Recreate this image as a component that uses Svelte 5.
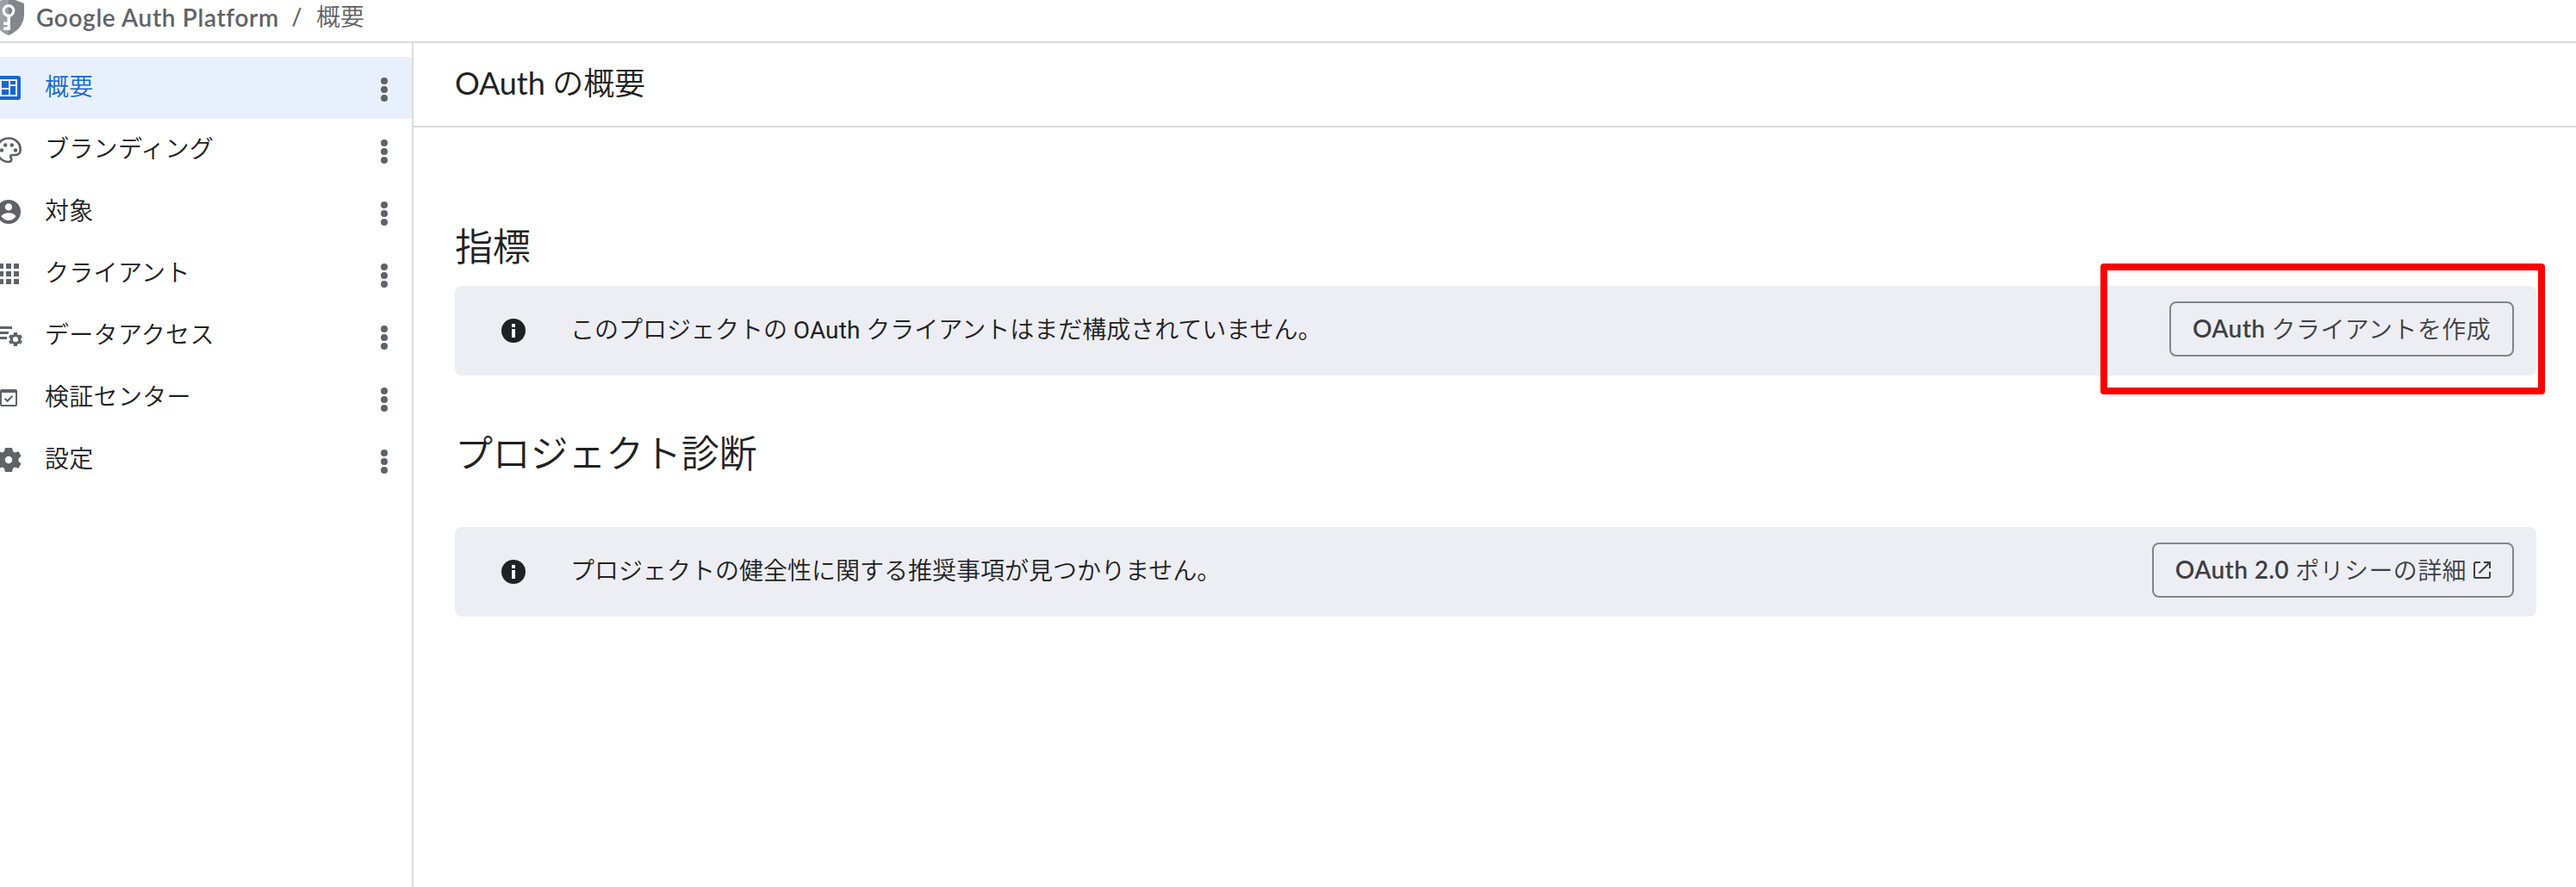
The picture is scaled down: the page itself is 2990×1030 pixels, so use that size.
<script>
  const navItems = [
    { label: "概要", icon: "dashboard", active: true },
    { label: "ブランディング", icon: "palette" },
    { label: "対象", icon: "person" },
    { label: "クライアント", icon: "apps" },
    { label: "データアクセス", icon: "data" },
    { label: "検証センター", icon: "verify" },
    { label: "設定", icon: "settings" },
  ];
</script>

{#snippet infoIcon()}
  <svg class="info" viewBox="0 0 28 28">
    <circle cx="14" cy="14" r="14" fill="#202124" />
    <path d="M12 6h4v4h-4zM12 12h4v10h-4z" fill="#fff" />
  </svg>
{/snippet}

<div class="page">
  <header class="topbar">
    <svg class="shield" viewBox="0 0 36 44">
      <path d="M18 0L0 7v13c0 11 8 20 18 24z" fill="#9aa0a6" />
      <path d="M18 0l18 7v13c0 11-8 20-18 24z" fill="#80868b" />
      <circle cx="18" cy="15.500" r="5.800" fill="none" stroke="#fff" stroke-width="3.200" />
      <path d="M16.500 21h3.500v17h-8v-3.500h4.500v-2.500h-4.500v-3.500h4.500z" fill="#fff" />
    </svg>
    <span class="product">Google Auth Platform</span>
    <span class="slash">/</span>
    <span class="crumb">概要</span>
  </header>

  <div class="body">
    <nav class="sidebar">
      {#each navItems as item}
        <a class="nav-item" class:active={item.active} href="#{item.icon}">
          <svg class="nav-icon" viewBox="0 0 36 36" fill="currentColor">
            {#if item.icon === "dashboard"}
              <path fill-rule="evenodd" d="M7 4h22a3 3 0 0 1 3 3v22a3 3 0 0 1-3 3H7a3 3 0 0 1-3-3V7a3 3 0 0 1 3-3zm1 4v20h20V8z" />
              <path d="M10 10h8v8h-8zM20 10h6v4h-6zM10 20h8v6h-8zM20 16h6v10h-6z" />
            {:else if item.icon === "palette"}
              <path d="M18 4.500C10 4.500 4.500 10.500 4.500 18S10.500 32 18 32c2 0 3.300-1.300 3.300-3.200 0-1-.5-1.500-.9-2.200-.6-1.300.2-2.600 1.800-2.600H26c3.300 0 5.700-2.500 5.700-6C31.700 10 25.500 4.500 18 4.500z" fill="none" stroke="currentColor" stroke-width="2.700" />
              <circle cx="10" cy="18.500" r="2.200" />
              <circle cx="14.200" cy="12.500" r="2.200" />
              <circle cx="21.800" cy="12.500" r="2.200" />
              <circle cx="26" cy="18.500" r="2.200" />
            {:else if item.icon === "person"}
              <path fill-rule="evenodd" d="M18 4a14 14 0 1 0 0 28 14 14 0 0 0 0-28zm0 4.200a4.200 4.200 0 1 1 0 8.400 4.200 4.200 0 0 1 0-8.400zM18 28c-3.500 0-6.500-1.800-8.400-4.500 0-2.800 5.600-4.300 8.400-4.300s8.400 1.500 8.400 4.300C24.500 26.200 21.500 28 18 28z" />
            {:else if item.icon === "apps"}
              <path d="M6 6h6v6H6zM15 6h6v6h-6zM24 6h6v6h-6zM6 15h6v6H6zM15 15h6v6h-6zM24 15h6v6h-6zM6 24h6v6H6zM15 24h6v6h-6zM24 24h6v6h-6z" />
            {:else if item.icon === "data"}
              <path d="M2 7h20v3H2zM2 13h16v3H2zM2 19h14v3H2z" />
              <circle cx="26" cy="22" r="4.700" fill="none" stroke="currentColor" stroke-width="3.200" />
              <g fill="none" stroke="currentColor" stroke-width="4">
                <path d="M26 14v4M26 26v4M19 18l3.500 2M29.500 24l3.500 2M19 26l3.500-2M29.500 20l3.500-2" />
              </g>
            {:else if item.icon === "verify"}
              <path fill-rule="evenodd" d="M10 8h16a2 2 0 0 1 2 2v16a2 2 0 0 1-2 2H10a2 2 0 0 1-2-2V10a2 2 0 0 1 2-2zm0 4v14h16V12z" />
              <path d="M13.500 18.800l3 3 6-6" fill="none" stroke="currentColor" stroke-width="2" />
            {:else}
              <path fill-rule="evenodd" d="M14 4h8l1 4.300 2.300 1.300 4.200-1.400 3 5.400-3 3v2.800l3 3-3 5.400-4.200-1.400L23 27.700 22 32h-8l-1-4.300-2.300-1.300-4.200 1.400-3-5.400 3-3v-2.800l-3-3 3-5.400 4.200 1.400L13 8.300zM18 13.800a4.200 4.200 0 1 0 0 8.400 4.200 4.200 0 0 0 0-8.400z" />
            {/if}
          </svg>
          <span class="nav-label">{item.label}</span>
          <svg class="more" viewBox="0 0 8 28">
            <circle cx="4" cy="4" r="4" />
            <circle cx="4" cy="14" r="4" />
            <circle cx="4" cy="24" r="4" />
          </svg>
        </a>
      {/each}
    </nav>

    <main class="content">
      <div class="title-bar">
        <h1><span class="latin">OAuth</span> の概要</h1>
      </div>

      <section class="metrics">
        <h2>指標</h2>
        <div class="notice">
          {@render infoIcon()}
          <p>このプロジェクトの <span class="roboto">OAuth</span> クライアントはまだ構成されていません。</p>
          <button class="create"><span class="latin">OAuth</span> クライアントを作成</button>
          <div class="highlight"></div>
        </div>
      </section>

      <section class="diagnosis">
        <h2>プロジェクト診断</h2>
        <div class="notice">
          {@render infoIcon()}
          <p>プロジェクトの健全性に関する推奨事項が見つかりません。</p>
          <button class="policy">
            <span class="latin">OAuth 2.0</span> ポリシーの詳細
            <svg class="launch" viewBox="0 0 20 20" fill="none" stroke="#3c4043" stroke-width="2">
              <path d="M8 1H2.500A1.500 1.500 0 0 0 1 2.500v15A1.500 1.500 0 0 0 2.500 19h15a1.500 1.500 0 0 0 1.500-1.500V12" />
              <path d="M12 1h7v7M18.500 1.500L6.500 13.500" />
            </svg>
          </button>
        </div>
      </section>
    </main>
  </div>
</div>

<style>
  :global(body) {
    background: #fff;
  }

  .page {
    display: flex;
    flex-direction: column;
    height: 1030px;
    overflow: hidden;
    color: #202124;
    font-family: Roboto, "Noto Sans CJK JP", sans-serif;
    font-size: 28px;
    font-weight: 350;
  }

  .topbar {
    display: flex;
    align-items: center;
    box-sizing: border-box;
    height: 50px;
    padding-bottom: 8px;
    border-bottom: 2px solid #dadce0;
    color: #5f6368;
    line-height: 40px;
    white-space: nowrap;
  }

  .shield {
    flex: none;
    width: 36px;
    height: 44px;
    margin: -2px 14px 0 -8px;
  }

  .product {
    width: 296px;
    font-family: Lato, sans-serif;
    font-size: 28px;
    font-weight: 600;
    letter-spacing: 0.65px;
  }

  .slash {
    width: 29px;
    margin-left: 1px;
    font-weight: 400;
  }

  .crumb {
    margin: 2px 0 0 -1px;
  }

  .body {
    display: flex;
    flex: 1;
  }

  .sidebar {
    flex: none;
    width: 478px;
    padding-top: 16px;
    border-right: 2px solid #dadce0;
  }

  .nav-item {
    display: flex;
    align-items: center;
    height: 72px;
    color: #5f6368;
    text-decoration: none;
  }

  .nav-item.active {
    background: #e8f0fe;
  }

  .nav-icon {
    flex: none;
    width: 36px;
    height: 36px;
    margin-left: -8px;
  }

  .nav-label {
    flex: 1;
    margin-left: 24px;
    color: #202124;
    letter-spacing: 0.3px;
    line-height: 40px;
  }

  .active .nav-icon,
  .active .nav-label {
    color: #1967d2;
  }

  .more {
    width: 8px;
    height: 28px;
    margin: 4px 28px 0 0;
    fill: #5f6368;
  }

  .content {
    flex: 1;
  }

  .title-bar {
    box-sizing: border-box;
    height: 98px;
    padding: 19px 48px;
    border-bottom: 2px solid #dadce0;
  }

  h1,
  h2,
  p {
    margin: 0;
    font-weight: 350;
    white-space: nowrap;
  }

  h1 {
    font-size: 36px;
    letter-spacing: -0.1px;
    line-height: 54px;
  }

  h2 {
    font-size: 44px;
    letter-spacing: -0.2px;
    line-height: 60px;
  }

  .latin {
    font-family: Lato, sans-serif;
    font-weight: 400;
  }

  .metrics {
    padding: 110px 46px 0 48px;
  }

  .metrics h2 {
    margin-bottom: 14px;
  }

  .diagnosis {
    padding: 62px 46px 0 48px;
  }

  .diagnosis h2 {
    margin-bottom: 54px;
  }

  .notice {
    position: relative;
    display: flex;
    align-items: center;
    box-sizing: border-box;
    height: 104px;
    padding: 0 26px 0 54px;
    border-radius: 8px;
    background: #edeef3;
  }

  .info {
    flex: none;
    width: 28px;
    height: 28px;
  }

  .notice p {
    flex: 1;
    margin-left: 52px;
    line-height: 40px;
  }

  .roboto {
    font-family: Roboto, sans-serif;
    font-weight: 400;
    letter-spacing: 0.1px;
  }

  button {
    display: flex;
    align-items: center;
    justify-content: center;
    box-sizing: border-box;
    height: 64px;
    margin-bottom: 4px;
    padding: 0 0 3px;
    border: 2px solid #80868b;
    border-radius: 8px;
    background: transparent;
    color: #3c4043;
    font: inherit;
    letter-spacing: 0.4px;
    white-space: pre;
  }

  button .latin {
    font-weight: 600;
  }

  .create {
    width: 400px;
  }

  .policy {
    width: 420px;
  }

  .launch {
    width: 20px;
    height: 20px;
    margin: 2px 0 0 1px;
  }

  .highlight {
    position: absolute;
    top: -26px;
    right: -10px;
    box-sizing: border-box;
    width: 516px;
    height: 152px;
    border: 8px solid #f00;
    border-radius: 4px;
  }
</style>
